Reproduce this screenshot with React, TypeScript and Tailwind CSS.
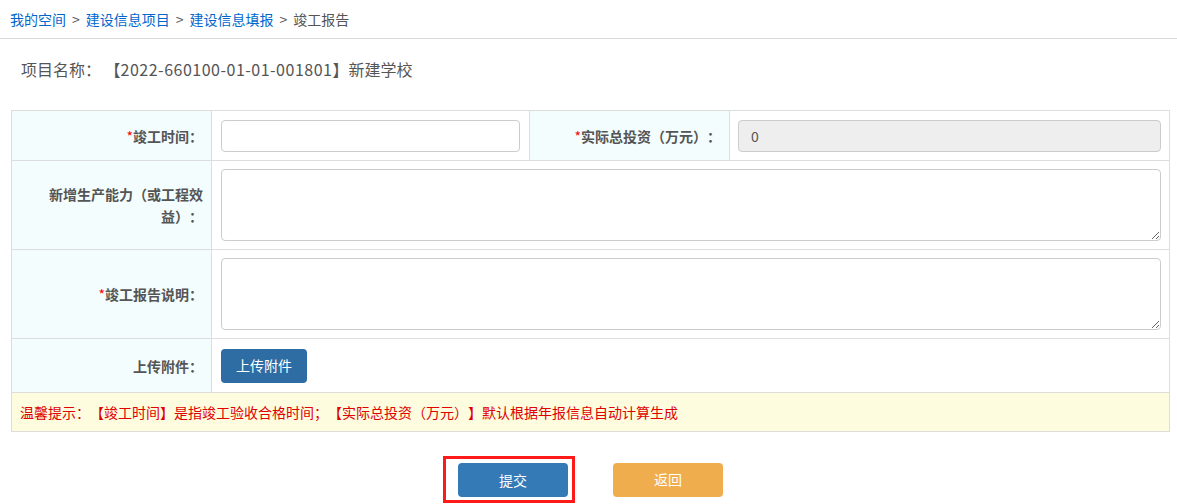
const font = { fontFamily: '"Microsoft YaHei", "Noto Sans CJK SC", "Noto Sans", sans-serif' };

function Label({ text, required }: { text: string; required?: boolean }) {
  return (
    <td className="w-[200px] bg-[#f4fdfd] border border-[#dddddd] pl-[16px] pr-[8px] text-right align-middle text-[14px] font-bold leading-[22px] text-[#555555]">
      {required && <span className="text-[#ff0000] font-normal">*</span>}
      {text}
    </td>
  );
}

export default function App() {
  return (
    <div className="w-[1177px] h-[504px] bg-white overflow-hidden [text-spacing-trim:space-all]" style={font}>
      <div className="h-[39px] flex items-center px-[10px] text-[14px] text-[#555555] border-b border-[#d9d9d9]">
        <a className="text-[#0066cc]">我的空间</a>
        <span className="mx-[6px]">&gt;</span>
        <a className="text-[#0066cc]">建设信息项目</a>
        <span className="mx-[6px]">&gt;</span>
        <a className="text-[#0066cc]">建设信息填报</a>
        <span className="mx-[6px]">&gt;</span>
        <span>竣工报告</span>
      </div>

      <div className="h-[71px] pt-[19px] pl-[21px] text-[16px] leading-[22px] text-[#555555]">
        项目名称： 【<span className="tracking-[0.5px]">2022-660100-01-01-001801</span>】新建学校
      </div>

      <div className="px-[11px]">
        <table className="w-[1159px] border-collapse table-fixed">
          <colgroup>
            <col className="w-[200px]" />
            <col className="w-[318px]" />
            <col className="w-[200px]" />
            <col />
          </colgroup>
          <tbody>
            <tr className="h-[50px]">
              <Label text="竣工时间：" required />
              <td className="border border-[#dddddd] px-[9px]">
                <input className="w-full h-[32px] border border-[#cccccc] rounded-[4px] px-[12px] text-[14px] outline-none" />
              </td>
              <Label text="实际总投资（万元）：" required />
              <td className="border border-[#dddddd] px-[8px]">
                <input
                  disabled
                  value="0"
                  className="w-full h-[32px] border border-[#cccccc] rounded-[4px] px-[12px] text-[14px] text-[#555555] bg-[#eeeeee] outline-none"
                />
              </td>
            </tr>
            <tr className="h-[89px]">
              <td className="bg-[#f4fdfd] border border-[#dddddd] pl-[30px] pr-[8px] text-right align-middle text-[14px] font-bold leading-[22px] text-[#555555]">
                新增生产能力（或工程效益）：
              </td>
              <td colSpan={3} className="border border-[#dddddd] px-[8px] pl-[9px]">
                <textarea className="block w-full h-[72px] border border-[#cccccc] rounded-[4px] px-[12px] py-[6px] text-[14px] outline-none resize-y" />
              </td>
            </tr>
            <tr className="h-[89px]">
              <Label text="竣工报告说明：" required />
              <td colSpan={3} className="border border-[#dddddd] px-[8px] pl-[9px]">
                <textarea className="block w-full h-[72px] border border-[#cccccc] rounded-[4px] px-[12px] py-[6px] text-[14px] outline-none resize-y" />
              </td>
            </tr>
            <tr className="h-[54px]">
              <Label text="上传附件：" />
              <td colSpan={3} className="border border-[#dddddd] px-[9px]">
                <button className="h-[34px] w-[86px] rounded-[4px] bg-[#2e6da4] text-white text-[14px]">
                  上传附件
                </button>
              </td>
            </tr>
            <tr className="h-[39px]">
              <td colSpan={4} className="border border-[#dddddd] bg-[#fdfcdf] px-[8px] text-[14px] text-[#e00000]">
                温馨提示：【竣工时间】是指竣工验收合格时间；【实际总投资（万元）】默认根据年报信息自动计算生成
              </td>
            </tr>
          </tbody>
        </table>
      </div>

      <div className="flex items-center gap-[38px] mt-[24px] pl-[443px]">
        <div className="border-[3px] border-[#ff1a1a] pl-[12px] pr-[4px] pt-[4px] pb-[3px]">
          <button className="block h-[34px] w-[110px] rounded-[4px] bg-[#337ab7] text-white text-[14px]">
            提交
          </button>
        </div>
        <button className="h-[34px] w-[110px] rounded-[4px] bg-[#f0ad4e] text-white text-[14px]">
          返回
        </button>
      </div>
    </div>
  );
}
